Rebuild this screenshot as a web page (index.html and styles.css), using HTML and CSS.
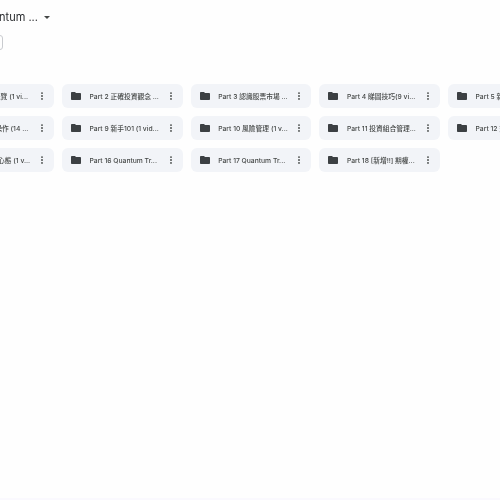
FILE: index.html
```html
<!DOCTYPE html>
<html lang="zh-Hant">
<head>
<meta charset="utf-8">
<title>Quantum</title>
<link rel="stylesheet" href="styles.css">
</head>
<body>
<svg class="defs" width="0" height="0" aria-hidden="true">
  <symbol id="folder" viewBox="0 0 24 24"><path d="M10 4H4c-1.1 0-2 .9-2 2v12c0 1.1.9 2 2 2h16c1.1 0 2-.9 2-2V8c0-1.100-.9-2-2-2h-8l-2-2z"/></symbol>
  <symbol id="dots" viewBox="0 0 24 24"><circle cx="12" cy="5" r="2.200"/><circle cx="12" cy="12" r="2.200"/><circle cx="12" cy="19" r="2.200"/></symbol>
</svg>
<main class="page">
  <header class="title-row">
    <h1 class="title">Quantum ...</h1>
    <span class="caret"></span>
  </header>
  <div class="filters"><span class="chip"></span></div>
  <section class="grid">
    <a class="card"><svg class="folder"><use href="#folder"/></svg><span class="name">Part 1 課程概覽 (1 vi...</span><svg class="dots"><use href="#dots"/></svg></a>
    <a class="card"><svg class="folder"><use href="#folder"/></svg><span class="name">Part 2 正確投資觀念 ...</span><svg class="dots"><use href="#dots"/></svg></a>
    <a class="card"><svg class="folder"><use href="#folder"/></svg><span class="name">Part 3 認識股票市場 ...</span><svg class="dots"><use href="#dots"/></svg></a>
    <a class="card"><svg class="folder"><use href="#folder"/></svg><span class="name">Part 4 睇圖技巧(9 vi...</span><svg class="dots"><use href="#dots"/></svg></a>
    <a class="card"><svg class="folder"><use href="#folder"/></svg><span class="name">Part 5 新手入門 (1 vi...</span><svg class="dots"><use href="#dots"/></svg></a>
    <a class="card"><svg class="folder"><use href="#folder"/></svg><span class="name">Part 8 實戰操作 (14 ...</span><svg class="dots"><use href="#dots"/></svg></a>
    <a class="card"><svg class="folder"><use href="#folder"/></svg><span class="name">Part 9 新手101 (1 vid...</span><svg class="dots"><use href="#dots"/></svg></a>
    <a class="card"><svg class="folder"><use href="#folder"/></svg><span class="name">Part 10 風險管理 (1 v...</span><svg class="dots"><use href="#dots"/></svg></a>
    <a class="card"><svg class="folder"><use href="#folder"/></svg><span class="name">Part 11 投資組合管理...</span><svg class="dots"><use href="#dots"/></svg></a>
    <a class="card"><svg class="folder"><use href="#folder"/></svg><span class="name">Part 12 交易系統 (1 ...</span><svg class="dots"><use href="#dots"/></svg></a>
    <a class="card"><svg class="folder"><use href="#folder"/></svg><span class="name">Part 15 交易心態 (1 v...</span><svg class="dots"><use href="#dots"/></svg></a>
    <a class="card"><svg class="folder"><use href="#folder"/></svg><span class="name">Part 16 Quantum Tr...</span><svg class="dots"><use href="#dots"/></svg></a>
    <a class="card"><svg class="folder"><use href="#folder"/></svg><span class="name">Part 17 Quantum Tr...</span><svg class="dots"><use href="#dots"/></svg></a>
    <a class="card"><svg class="folder"><use href="#folder"/></svg><span class="name">Part 18 [新增!!] 期權...</span><svg class="dots"><use href="#dots"/></svg></a>
  </section>
</main>
</body>
</html>
```
FILE: styles.css
```css
html, body {
  margin: 0;
  height: 100%;
  overflow: hidden;
  background: #fefefe;
}
.defs { position: absolute; }
.page {
  height: 498px;
  border-bottom: 2px solid #faf9fe;
  font-family: "Inter", "Noto Sans CJK TC", sans-serif;
  color: #444746;
  overflow: hidden;
  filter: blur(0.45px);
}
.title-row {
  display: flex;
  align-items: center;
  gap: 6px;
  height: 16px;
  margin: 9px 0 0 -22px;
}
.title {
  margin: 0;
  font-size: 11px;
  font-weight: 400;
  color: #2b2d30;
  white-space: nowrap;
}
.caret {
  width: 0;
  height: 0;
  border-left: 3px solid transparent;
  border-right: 3px solid transparent;
  border-top: 3px solid #444746;
}
.filters {
  margin: 10px 0 0 -20px;
  height: 15px;
}
.chip {
  display: block;
  box-sizing: border-box;
  width: 23px;
  height: 15px;
  border: 1px solid #c9cbcf;
  border-radius: 3px;
}
.grid {
  display: grid;
  grid-template-columns: repeat(5, 120.5px);
  grid-auto-rows: 23.7px;
  column-gap: 8.2px;
  row-gap: 8.5px;
  margin: 34px 0 0 -66.700px;
  width: 700px;
}
.card {
  display: flex;
  align-items: center;
  background: #f2f4f8;
  border-radius: 6px;
  padding: 0 7px 0 8px;
  min-width: 0;
}
.folder {
  flex: none;
  width: 12px;
  height: 12px;
  fill: #3c4043;
}
.name {
  flex: 1;
  min-width: 0;
  margin-left: 7.5px;
  font-size: 6.75px;
  font-weight: 500;
  white-space: nowrap;
  overflow: hidden;
}
.dots {
  flex: none;
  width: 10px;
  height: 10px;
  fill: #444746;
}
```
